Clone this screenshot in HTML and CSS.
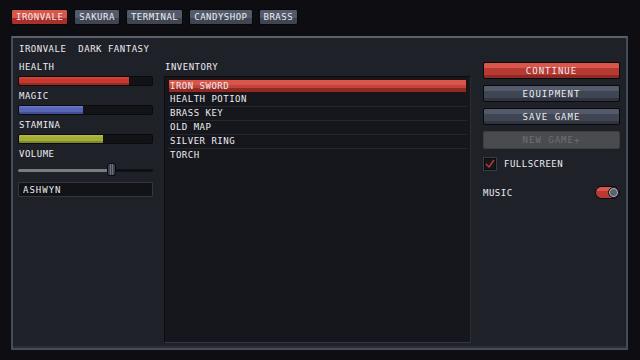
FILE: index.html
```html
<!DOCTYPE html>
<html lang="en">

<head>
    <meta charset="UTF-8">
    <meta name="viewport" content="width=device-width, initial-scale=1.0">
    <title>ironvale</title>
    <link rel="stylesheet" href="styles.css">
</head>

<body>

    <nav class="tabs">
        <a class="tab active" href="#">Ironvale</a>
        <a class="tab" href="#">Sakura</a>
        <a class="tab" href="#">Terminal</a>
        <a class="tab" href="#">Candyshop</a>
        <a class="tab" href="#">Brass</a>
    </nav>

    <div class="panel">
        <div class="panel-title">
            <span>Ironvale</span>
            <span>Dark Fantasy</span>
        </div>

        <div class="columns">
            <!-- stats -->
            <div class="col-left">
                <div class="label">Health</div>
                <div class="bar"><div class="fill health" style="width: 83%"></div></div>

                <div class="label">Magic</div>
                <div class="bar"><div class="fill magic" style="width: 48%"></div></div>

                <div class="label">Stamina</div>
                <div class="bar"><div class="fill stamina" style="width: 63%"></div></div>

                <div class="label">Volume</div>
                <div class="slider">
                    <div class="track">
                        <div class="track-fill" style="width: 66%"></div>
                    </div>
                    <div class="thumb" style="left: 89px"></div>
                </div>

                <input class="name-input" type="text" value="ASHWYN">
            </div>

            <!-- inventory -->
            <div class="col-mid">
                <div class="label">Inventory</div>
                <ul class="inventory">
                    <li class="selected">Iron Sword</li>
                    <li>Health Potion</li>
                    <li>Brass Key</li>
                    <li>Old Map</li>
                    <li>Silver Ring</li>
                    <li>Torch</li>
                </ul>
            </div>

            <!-- menu -->
            <div class="col-right">
                <button class="btn primary">Continue</button>
                <button class="btn">Equipment</button>
                <button class="btn">Save Game</button>
                <button class="btn disabled" disabled>New Game+</button>

                <label class="check-row">
                    <span class="checkbox">
                        <svg width="10" height="10" viewBox="0 0 10 10">
                            <path d="M1 5 L4 8 L9 1" fill="none" stroke="#c8372d" stroke-width="1.4"/>
                        </svg>
                    </span>
                    <span class="check-text">Fullscreen</span>
                </label>

                <div class="toggle-row">
                    <span>Music</span>
                    <span class="toggle"><span class="knob"></span></span>
                </div>
            </div>
        </div>
    </div>

</body>

</html>
```

FILE: styles.css
```css
body {
    font-family: 'DejaVu Sans Mono', monospace;
    font-size: 9px;
    letter-spacing: 0.5px;
    text-transform: uppercase;
    color: #ececf0;
    background-color: #0d0d12;
    margin: 0;
    padding: 9px 12px 0 11px;
    height: 360px;
    box-sizing: border-box;
}

.tabs {
    display: flex;
    gap: 6px;
    height: 16px;
}

.tab {
    display: flex;
    align-items: center;
    padding: 0 4px;
    color: #ececf0;
    text-decoration: none;
    border: 1px solid #08080b;
    border-radius: 2px;
    background: linear-gradient(#535a6a 0, #535a6a 55%, #3f4553 55%, #3f4553 100%);
    box-sizing: border-box;
}

.tab.active {
    background: linear-gradient(#d9574a 0, #d9574a 55%, #a8302a 55%, #a8302a 100%);
}

.panel {
    margin-top: 11px;
    height: 314px;
    box-sizing: border-box;
    background-color: #1f2129;
    border: 2px solid #464b57;
    border-top-color: #5a606c;
    box-shadow: inset 0 -2px 0 #2b2e36;
    padding: 5px;
    display: flex;
    flex-direction: column;
}

.panel-title {
    height: 12px;
    line-height: 12px;
    padding-left: 1px;
    display: flex;
    gap: 12px;
}

.columns {
    margin-top: 6px;
    flex: 1;
    display: grid;
    grid-template-columns: 135px 307px 138px;
    column-gap: 11px;
}

.label {
    height: 12px;
    line-height: 12px;
    margin-bottom: 3px;
    padding-left: 1px;
}

.bar {
    height: 10px;
    background-color: #121317;
    border: 1px solid #0a0a0d;
    border-radius: 2px;
    box-sizing: border-box;
    margin-bottom: 4px;
    overflow: hidden;
}

.fill {
    height: 100%;
}

.fill.health {
    background: linear-gradient(#d94a3e 0, #c8372d 30%, #c8372d 75%, #9c2a24 75%);
}

.fill.magic {
    background: linear-gradient(#6f7cc8 0, #5865b5 30%, #5865b5 75%, #434d92 75%);
}

.fill.stamina {
    background: linear-gradient(#b6c24a 0, #a3ae38 30%, #a3ae38 75%, #7f8a25 75%);
}

.slider {
    position: relative;
    height: 14px;
    display: flex;
    align-items: center;
}

.track {
    width: 100%;
    height: 3px;
    background-color: #0f1014;
    border-radius: 2px;
}

.track-fill {
    height: 100%;
    background-color: #7a7b80;
    border-radius: 2px 0 0 2px;
}

.thumb {
    position: absolute;
    top: 0;
    width: 9px;
    height: 13px;
    box-sizing: border-box;
    background: linear-gradient(90deg, #3d4250 0, #3d4250 35%, #6b7282 35%, #6b7282 45%, #3d4250 45%, #3d4250 55%, #6b7282 55%, #6b7282 65%, #3d4250 65%);
    border: 1px solid #0a0a0d;
    border-radius: 3px;
}

.name-input {
    display: block;
    margin-top: 5px;
    width: 100%;
    height: 15px;
    box-sizing: border-box;
    background-color: #121317;
    border: 1px solid #34373f;
    border-radius: 1px;
    color: #ececf0;
    font-family: inherit;
    font-size: 9px;
    letter-spacing: 1px;
    padding: 0 4px;
    outline: none;
}

.col-mid {
    display: flex;
    flex-direction: column;
}

.inventory {
    flex: 1;
    list-style: none;
    margin: 0;
    padding: 2px 3px;
    background-color: #16171c;
    border: 1px solid #0b0c0f;
    border-bottom-color: #34373f;
    border-right-color: #2a2d34;
}

.inventory li {
    height: 13px;
    line-height: 13px;
    padding-left: 2px;
    border-bottom: 1px solid #25272d;
}

.inventory li:last-child {
    border-bottom: none;
}

.inventory li.selected {
    padding-left: 1px;
    border: 1px solid #2b0d0b;
    background: linear-gradient(#d9574a 0, #d9574a 40%, #c0453b 40%, #c0453b 70%, #8f2a25 70%);
    height: 12px;
    line-height: 12px;
}

.col-right {
    display: flex;
    flex-direction: column;
    padding-top: 1px;
    margin-left: 1px;
}

.btn {
    height: 17px;
    margin-bottom: 6px;
    font-family: inherit;
    font-size: 9px;
    letter-spacing: 1px;
    text-transform: uppercase;
    color: #ececf0;
    border: 1px solid #09090c;
    border-radius: 2px;
    background: linear-gradient(#535a6a 0, #535a6a 35%, #3f4553 35%, #3f4553 80%, #30343f 80%);
    padding: 0;
    cursor: pointer;
}

.btn.primary {
    background: linear-gradient(#d9574a 0, #d9574a 35%, #b63a31 35%, #b63a31 80%, #8f2a25 80%);
}

.btn.disabled {
    height: 18px;
    color: #6e6f74;
    border-color: #3d3e42;
    background: #4a4b4f;
    cursor: default;
}

.check-row {
    margin-top: 2px;
    display: flex;
    align-items: center;
    gap: 7px;
}

.checkbox {
    width: 14px;
    height: 14px;
    box-sizing: border-box;
    background-color: #16171c;
    border: 1px solid #3a3d45;
    box-shadow: inset 0 0 0 1px #0b0c0f;
    display: flex;
    align-items: center;
    justify-content: center;
}

.toggle-row {
    margin-top: 15px;
    display: flex;
    align-items: center;
    justify-content: space-between;
}

.toggle {
    width: 25px;
    height: 13px;
    box-sizing: border-box;
    border-radius: 7px;
    border: 1px solid #0a0a0d;
    background: linear-gradient(#d9574a 0, #d9574a 35%, #b63a31 35%);
    display: flex;
    justify-content: flex-end;
}

.knob {
    width: 11px;
    height: 11px;
    box-sizing: border-box;
    border-radius: 50%;
    background-color: #5a6170;
    border: 1px solid #0a0a0d;
    box-shadow: inset 0 0 0 1px #b8bcc6;
}
```
